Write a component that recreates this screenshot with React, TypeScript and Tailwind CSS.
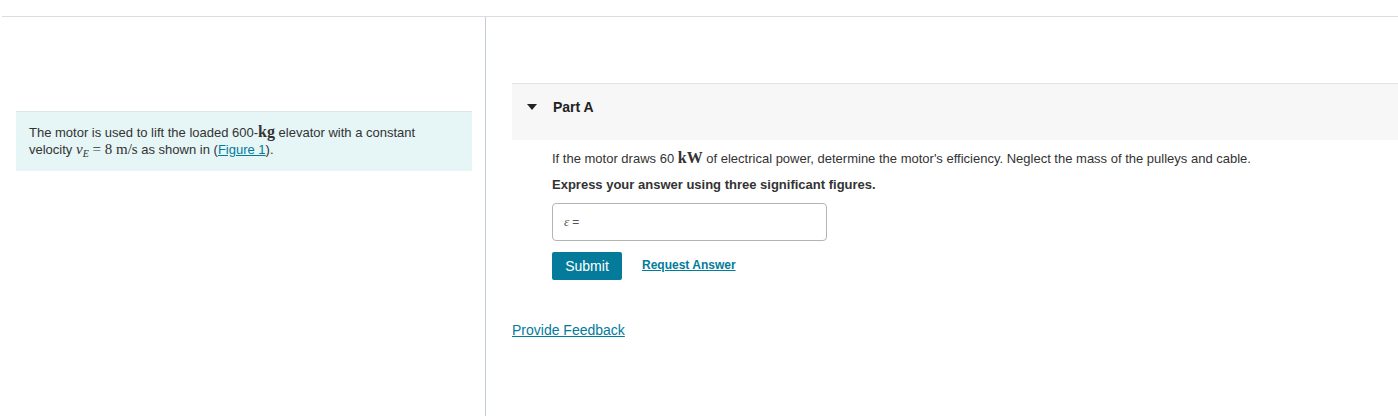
import React from 'react'

const math = { fontFamily: '"Liberation Serif", "DejaVu Serif", serif' }

const App = () => {
  return (
    <div
      className="min-h-screen bg-white text-[#333333] flex flex-col"
      style={{ fontFamily: '"Liberation Sans", Arial, sans-serif' }}
    >
      <div className="h-4" />
      <div className="flex flex-1 border-t border-[#dcdcdc] ml-[2px]">
        {/* left: problem statement */}
        <div className="w-[484px] shrink-0 border-r border-[#c3cbd8] pt-[94px]">
          <div className="ml-[14px] w-[456px] h-[60px] bg-[#e6f5f5] border-t border-[#dde6e6] px-[13px] pt-[12px] text-[13px] leading-[17px]">
            The motor is used to lift the loaded 600-
            <span style={math} className="text-[16px] font-bold leading-none">kg</span> elevator with a
            constant
            <br />
            velocity{' '}
            <span style={math} className="text-[15px] leading-none">
              <i>v</i>
              <sub className="text-[10px] italic">E</sub> = 8 m/s
            </span>{' '}
            as shown in (
            <a href="#" className="text-[#007c9c] underline">
              Figure 1
            </a>
            ).
          </div>
        </div>

        {/* right: Part A */}
        <div className="flex-1 pt-[66px] pl-[26px]">
          <div className="bg-[#f7f7f7] border-t border-[#e3e3e3] h-[57px] flex items-start pt-[15px]">
            <svg width="10" height="6" viewBox="0 0 10 6" className="ml-[15px] mt-[5px]">
              <path d="M0 0 L10 0 L5 6 Z" fill="#222" />
            </svg>
            <span className="ml-[16px] text-[14px] leading-[16px] font-bold text-[#222]">Part A</span>
          </div>

          <div className="pl-[40px]">
            <p className="mt-[10px] text-[13px] leading-[17px]">
              If the motor draws 60{' '}
              <span style={math} className="text-[16px] font-bold leading-none">kW</span> of electrical
              power, determine the motor's efficiency. Neglect the mass of the pulleys and cable.
            </p>
            <p className="mt-[9px] text-[13px] font-bold leading-[17px]">
              Express your answer using three significant figures.
            </p>
            <div className="mt-[10px] w-[275px] h-[38px] border border-[#b4b4b4] rounded-[4px] flex items-center pl-[11px] text-[12px] text-[#555]">
              <span style={math} className="italic text-[13px]">ε</span>
              <span className="ml-[3px]">=</span>
            </div>
            <div className="mt-[11px] flex items-center">
              <button className="w-[70px] h-[28px] bg-[#047b9b] text-white text-[14px] rounded-[2px]">
                Submit
              </button>
              <a href="#" className="ml-[20px] text-[12px] font-bold text-[#007c9c] underline -mt-[3px]">
                Request Answer
              </a>
            </div>
          </div>

          <a href="#" className="inline-block mt-[40px] text-[14px] text-[#007c9c] underline">
            Provide Feedback
          </a>
        </div>
      </div>
    </div>
  )
}

export default App
